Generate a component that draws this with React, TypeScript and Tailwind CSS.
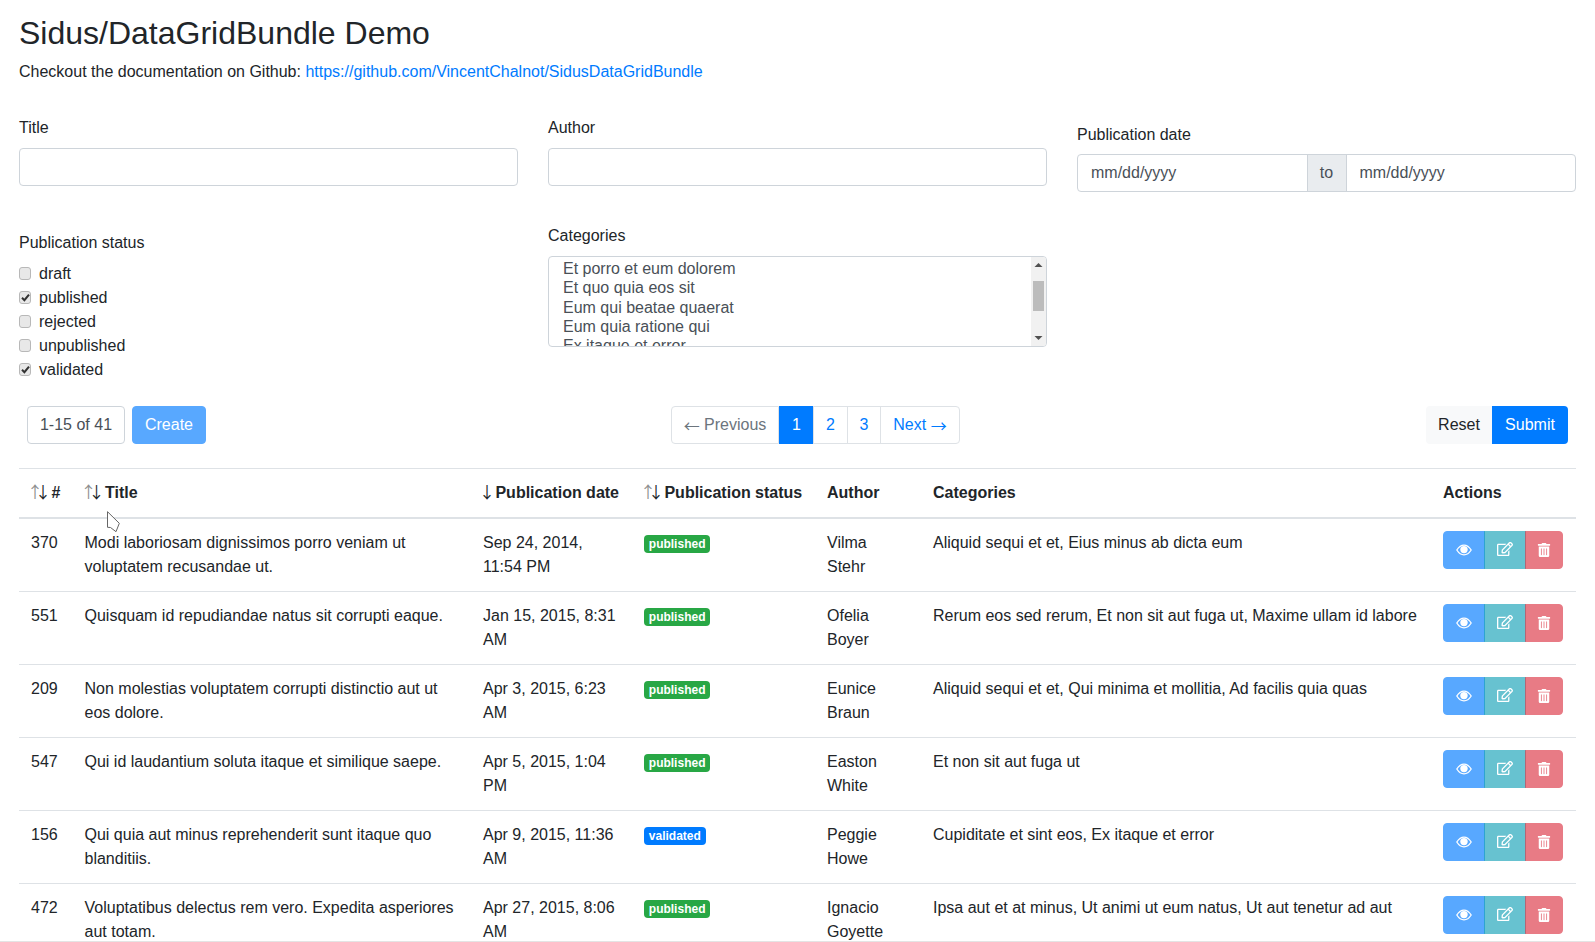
import { FaRegEdit, FaTrashAlt } from "react-icons/fa";

const rows = [
  ["370", "Modi laboriosam dignissimos porro veniam ut voluptatem recusandae ut.", "Sep 24, 2014, 11:54 PM", "published", "Vilma Stehr", "Aliquid sequi et et, Eius minus ab dicta eum"],
  ["551", "Quisquam id repudiandae natus sit corrupti eaque.", "Jan 15, 2015, 8:31 AM", "published", "Ofelia Boyer", "Rerum eos sed rerum, Et non sit aut fuga ut, Maxime ullam id labore"],
  ["209", "Non molestias voluptatem corrupti distinctio aut ut eos dolore.", "Apr 3, 2015, 6:23 AM", "published", "Eunice Braun", "Aliquid sequi et et, Qui minima et mollitia, Ad facilis quia quas"],
  ["547", "Qui id laudantium soluta itaque et similique saepe.", "Apr 5, 2015, 1:04 PM", "published", "Easton White", "Et non sit aut fuga ut"],
  ["156", "Qui quia aut minus reprehenderit sunt itaque quo blanditiis.", "Apr 9, 2015, 11:36 AM", "validated", "Peggie Howe", "Cupiditate et sint eos, Ex itaque et error"],
  ["472", "Voluptatibus delectus rem vero. Expedita asperiores aut totam.", "Apr 27, 2015, 8:06 AM", "published", "Ignacio Goyette", "Ipsa aut et at minus, Ut animi ut eum natus, Ut aut tenetur ad aut"],
];

const inputCls = "w-full h-[38px] rounded-[4px] border border-[#ced4da] bg-white px-3 text-[#495057] outline-none";
const arrowFont = "[font-family:'Noto_Sans_CJK_JP',sans-serif]";

function Check({ label, checked }: { label: string; checked?: boolean }) {
  return (
    <div className="flex h-6 items-center">
      <span className="mb-[2px] flex h-[13px] w-[12px] items-center justify-center rounded-[3px] border border-[#b8b8b8] bg-[#e8e8e8]">
        {checked && (
          <svg width="9" height="9" viewBox="0 0 9 9">
            <path d="M1 4.8 L3.4 7.2 L8 1.6" fill="none" stroke="#333" strokeWidth="2" />
          </svg>
        )}
      </span>
      <span className="ml-[8px] text-[#212529]">{label}</span>
    </div>
  );
}

function Sort({ active }: { active?: boolean }) {
  return active ? (
    <span className={`-ml-[4px] inline-block w-[12px] whitespace-nowrap font-normal leading-none text-[#212529] ${arrowFont}`}>↓</span>
  ) : (
    <span className={`-ml-[4px] inline-block w-[20px] whitespace-nowrap font-normal leading-none tracking-[-8px] ${arrowFont}`}>
      <span className="text-[#8f8f8f]">↑</span>
      <span className="text-[#212529]">↓</span>
    </span>
  );
}

function Th({ children }: { children: React.ReactNode }) {
  return <th className="border-b-2 border-t border-[#dee2e6] p-3 text-left align-top font-bold text-[#212529]">{children}</th>;
}

function Td({ children }: { children: React.ReactNode }) {
  return <td className="border-t border-[#dee2e6] p-3 align-top text-[#212529]">{children}</td>;
}

function Eye() {
  return (
    <svg width="16" height="16" viewBox="0 0 16 16">
      <path d="M0.8 8 C3 4.6 5.5 3.1 8 3.1 S13 4.6 15.2 8 C13 11.4 10.5 12.9 8 12.9 S3 11.4 0.8 8 Z" fill="none" stroke="#fff" strokeWidth="1.3" />
      <circle cx="8" cy="7.6" r="3.7" fill="#fff" />
    </svg>
  );
}

export default function App() {
  return (
    <div className="relative h-[942px] overflow-hidden border-b border-[#e4e4e4] bg-white px-[19px] pt-[14px] text-base leading-6 text-[#212529] [font-family:'Liberation_Sans',Arial,sans-serif]">
      <h1 className="mb-2 text-[32px] font-normal leading-[38.4px]">Sidus/DataGridBundle Demo</h1>
      <p>
        Checkout the documentation on Github:{" "}
        <a href="#" className="text-[#007bff]">https://github.com/VincentChalnot/SidusDataGridBundle</a>
      </p>

      <div className="mt-[32px] grid grid-cols-3 gap-x-[30px]">
        <div className="h-[107px]">
          <label className="mb-2 block">Title</label>
          <input className={inputCls} />
        </div>
        <div className="h-[107px]">
          <label className="mb-2 block">Author</label>
          <input className={inputCls} />
        </div>
        <div className="h-[107px] pt-[7px]">
          <label className="mb-[7px] block">Publication date</label>
          <div className="flex h-[38px]">
            <input placeholder="mm/dd/yyyy" className="h-[38px] min-w-0 flex-1 rounded-l-[4px] border border-[#ced4da] px-[13px] text-[#495057] outline-none placeholder:text-[#495057]" />
            <span className="-ml-px flex h-[38px] w-[40px] items-center justify-center border border-[#ced4da] bg-[#e9ecef] text-[#495057]">to</span>
            <input placeholder="mm/dd/yyyy" className="-ml-px h-[38px] min-w-0 flex-1 rounded-r-[4px] border border-[#ced4da] px-[13px] text-[#495057] outline-none placeholder:text-[#495057]" />
          </div>
        </div>

        <div className="pt-[8px]">
          <label className="mb-[7px] block">Publication status</label>
          <Check label="draft" />
          <Check label="published" checked />
          <Check label="rejected" />
          <Check label="unpublished" />
          <Check label="validated" checked />
        </div>
        <div className="pt-px">
          <label className="mb-2 block">Categories</label>
          <div className="flex h-[91px] overflow-hidden rounded-[4px] border border-[#ced4da] bg-white text-[#495057]">
            <div className="min-w-0 flex-1 overflow-hidden pl-[14px] pt-[1.6px] leading-[19.3px]">
              <div>Et porro et eum dolorem</div>
              <div>Et quo quia eos sit</div>
              <div>Eum qui beatae quaerat</div>
              <div>Eum quia ratione qui</div>
              <div>Ex itaque et error</div>
            </div>
            <div className="flex w-[15px] flex-col items-center bg-[#f1f1f1]">
              <svg width="15" height="17" viewBox="0 0 15 17" className="shrink-0">
                <path d="M3.5 10 L7.5 6 L11.5 10 Z" fill="#505050" />
              </svg>
              <div className="mt-[7px] h-[30px] w-[11px] bg-[#bcbcbc]" />
              <svg width="15" height="17" viewBox="0 0 15 17" className="mt-auto shrink-0">
                <path d="M3.5 7 L7.5 11 L11.5 7 Z" fill="#505050" />
              </svg>
            </div>
          </div>
        </div>
        <div />
      </div>

      <div className="mt-[24px] flex h-[38px] px-2">
        <div className="flex gap-[7px]">
          <span className="flex h-[38px] w-[98px] items-center justify-center rounded-[4px] border border-[#ced4da] text-[#495057]">1-15 of 41</span>
          <button className="h-[38px] w-[74px] rounded-[4px] border border-[#007bff] bg-[#007bff] text-white opacity-65">Create</button>
        </div>
        <div className="ml-[465px] flex h-[38px] text-[#007bff]">
          <span className="flex w-[108px] items-center justify-center whitespace-pre rounded-l-[4px] border border-[#dee2e6] text-[#6c757d]"><span className={`leading-none ${arrowFont}`}>←</span> Previous</span>
          <span className="flex w-[35px] items-center justify-center border border-[#007bff] bg-[#007bff] text-white">1</span>
          <span className="flex w-[35px] -ml-px items-center justify-center border border-[#dee2e6]">2</span>
          <span className="flex w-[34px] -ml-px items-center justify-center border border-[#dee2e6]">3</span>
          <span className="flex w-[80px] -ml-px items-center justify-center whitespace-pre rounded-r-[4px] border border-[#dee2e6]">Next <span className={`leading-none ${arrowFont}`}>→</span></span>
        </div>
        <div className="ml-auto flex h-[38px]">
          <button className="w-[66px] rounded-l-[4px] bg-[#f8f9fa] text-[#212529]">Reset</button>
          <button className="w-[76px] rounded-r-[4px] bg-[#007bff] text-white">Submit</button>
        </div>
      </div>

      <table className="mt-[24px] w-full table-fixed border-collapse">
        <colgroup>
          <col className="w-[53.5px]" />
          <col className="w-[398.5px]" />
          <col className="w-[161px]" />
          <col className="w-[183px]" />
          <col className="w-[106px]" />
          <col className="w-[510px]" />
          <col className="w-[145px]" />
        </colgroup>
        <thead>
          <tr>
            <Th><Sort /> #</Th>
            <Th><Sort /> Title</Th>
            <Th><Sort active /> Publication date</Th>
            <Th><span className="whitespace-nowrap"><Sort /> Publication status</span></Th>
            <Th>Author</Th>
            <Th>Categories</Th>
            <Th>Actions</Th>
          </tr>
        </thead>
        <tbody>
          {rows.map((r) => (
            <tr key={r[0]}>
              <Td>{r[0]}</Td>
              <Td>{r[1]}</Td>
              <Td>{r[2]}</Td>
              <Td>
                <span className={`inline-block rounded-[4px] px-[4.8px] py-[3px] align-baseline text-xs font-bold leading-3 text-white ${r[3] === "validated" ? "bg-[#007bff]" : "bg-[#28a745]"}`}>{r[3]}</span>
              </Td>
              <Td>{r[4]}</Td>
              <Td>{r[5]}</Td>
              <Td>
                <div className="flex h-[38px] w-[120px]">
                  <span className="flex w-[42px] items-center justify-center rounded-l-[4px] border border-[#007bff] bg-[#007bff] text-white opacity-65"><Eye /></span>
                  <span className="-ml-px flex w-[42px] items-center justify-center border border-[#17a2b8] bg-[#17a2b8] pb-[2px] text-white opacity-65"><FaRegEdit size={16} /></span>
                  <span className="-ml-px flex w-[38px] items-center justify-center rounded-r-[4px] border border-[#dc3545] bg-[#dc3545] text-white opacity-65"><FaTrashAlt size={14} /></span>
                </div>
              </Td>
            </tr>
          ))}
        </tbody>
      </table>

      <svg width="16" height="23" viewBox="0 0 16 23" className="absolute left-[106px] top-[511px]">
        <path d="M1.5 0.7 L1.5 16.3 L4.5 16.5 L10 20.7 L13.3 12.3 Z" fill="#fff" stroke="#666" strokeWidth="1" />
      </svg>
    </div>
  );
}
